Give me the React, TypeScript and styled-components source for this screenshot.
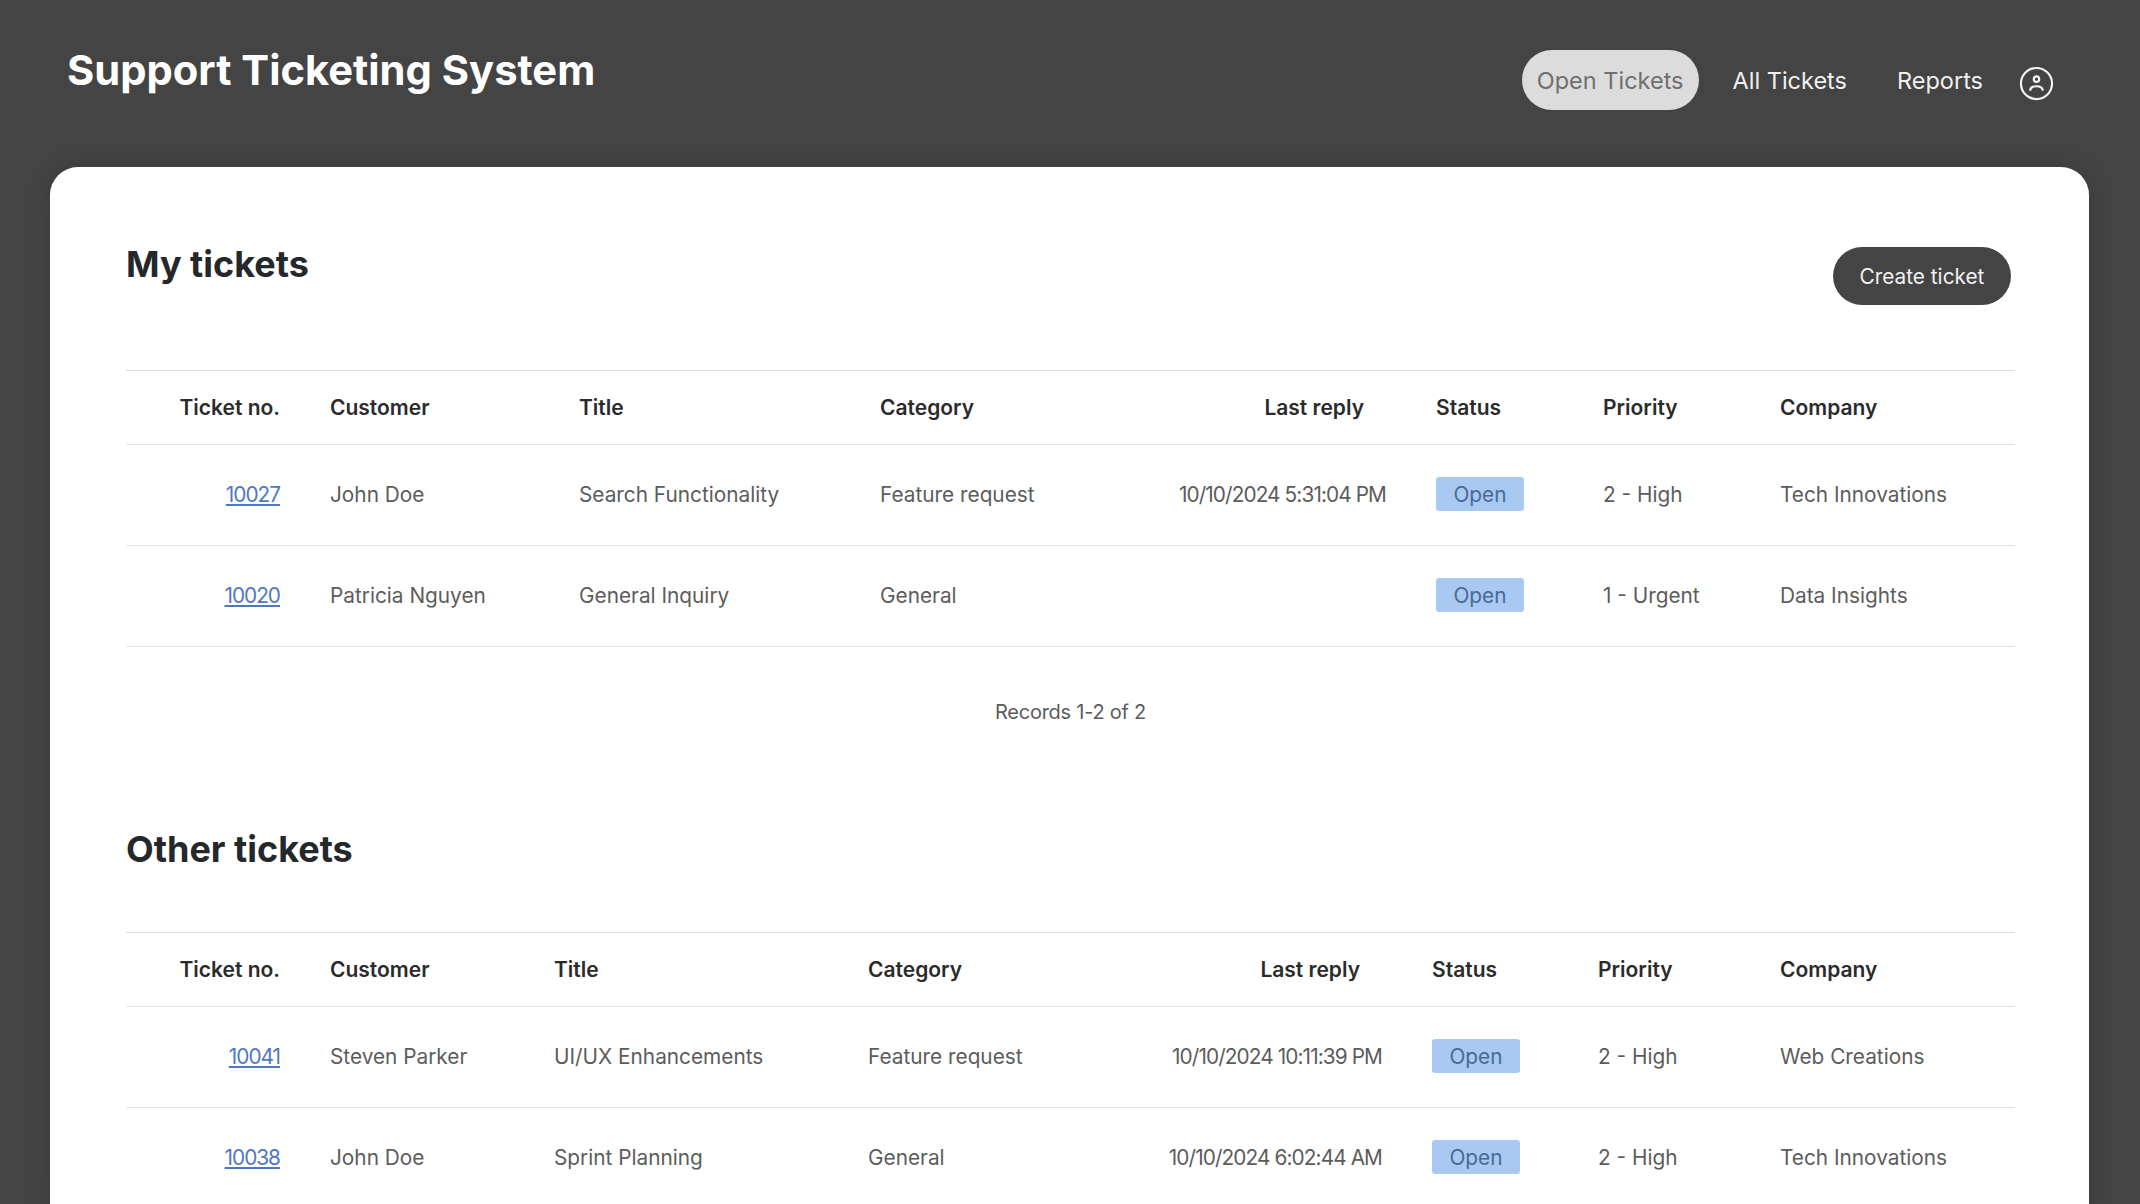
import React from 'react';
import styled, { createGlobalStyle } from 'styled-components';

const GlobalStyle = createGlobalStyle`
    html, body {
        margin: 0;
        padding: 0;
        height: 100%;
        overflow: hidden;
        background: #444444;
    }
`;

const Page = styled.div`
    height: 100vh;
    overflow: hidden;
    background: #444444;
    font-family: Inter, "Open Sans", sans-serif;
    display: flex;
    flex-direction: column;
`;

const Header = styled.header`
    flex: 0 0 167px;
    height: 167px;
    box-sizing: border-box;
    padding: 50px 86px 0 67px;
    display: flex;
    justify-content: space-between;
    align-items: flex-start;
`;

const Brand = styled.h1`
    margin: 0;
    font-size: 41.7px;
    line-height: 40px;
    font-weight: 700;
    color: #ffffff;
`;

const Nav = styled.nav`
    display: flex;
    align-items: center;
    height: 60px;
    gap: 18px;
`;

const NavItem = styled.a<{ $active?: boolean }>`
    display: flex;
    align-items: center;
    height: 60px;
    padding: ${(p) => (p.$active ? '0 15px' : '0 16px')};
    font-size: 23.5px;
    font-weight: 400;
    color: ${(p) => (p.$active ? '#6f6f6f' : '#f0f0f0')};
    background: ${(p) => (p.$active ? '#dcdcdc' : 'transparent')};
    border-radius: 30px;
`;

const UserIcon = styled.svg`
    width: 35px;
    height: 35px;
    margin: 6px 0 0 2px;
    color: #f4f4f4;
`;

const Card = styled.main`
    flex: 1;
    margin: 0 51px 0 50px;
    padding: 80px 74px 0 76px;
    background: #ffffff;
    border-radius: 28px 28px 0 0;
    box-shadow: 0 0 24px rgba(0, 0, 0, 0.15);
`;

const SectionHead = styled.div`
    display: flex;
    justify-content: space-between;
    align-items: flex-start;
    height: 123px;
`;

const OtherHead = styled(SectionHead)`
    height: 100px;
`;

const Heading = styled.h2`
    margin: 0;
    font-size: 36px;
    line-height: 34px;
    font-weight: 700;
    color: #25282b;
`;

const CreateButton = styled.button`
    width: 178px;
    height: 58px;
    margin-right: 4px;
    border: none;
    border-radius: 29px;
    background: #444444;
    color: #f2f2f2;
    font-family: inherit;
    font-size: 20.8px;
`;

const Table = styled.table`
    width: 100%;
    table-layout: fixed;
    border-collapse: collapse;
    border-top: 1px solid #dedede;
`;

const HeadCell = styled.th<{ $align?: string; $inset?: number }>`
    height: 73px;
    padding: 0 ${(p) => 25 + (p.$inset || 0)}px 0 25px;
    text-align: ${(p) => p.$align || 'left'};
    font-size: 21px;
    font-weight: 600;
    color: #2b2b2b;
    border-bottom: 1px solid #e2e2e2;
`;

const BodyCell = styled.td<{ $align?: string }>`
    height: 98px;
    padding: 0 25px 2px;
    text-align: ${(p) => p.$align || 'left'};
    font-size: 20.8px;
    color: #5c5c5c;
    white-space: nowrap;
    border-bottom: 1px solid #e2e2e2;
`;

// the digits are narrower in the original font
const ReplyCell = styled(BodyCell)`
    letter-spacing: -0.9px;
`;

const TicketLink = styled.a`
    color: #4f78c4;
    letter-spacing: -1px;
    text-decoration: underline;
`;

const StatusBadge = styled.span`
    display: flex;
    align-items: center;
    justify-content: center;
    width: 88px;
    height: 34px;
    border-radius: 3px;
    background: #a9c8f2;
    color: #4a6a96;
`;

const Records = styled.div`
    height: 185px;
    padding-top: 53px;
    box-sizing: border-box;
    text-align: center;
    font-size: 20px;
    line-height: 24px;
    letter-spacing: -0.25px;
    color: #5c5c5c;
`;

interface Ticket {
    no: string;
    customer: string;
    title: string;
    category: string;
    reply: string;
    priority: string;
    company: string;
}

const myTickets: Ticket[] = [
    { no: '10027', customer: 'John Doe', title: 'Search Functionality', category: 'Feature request', reply: '10/10/2024 5:31:04 PM', priority: '2 - High', company: 'Tech Innovations' },
    { no: '10020', customer: 'Patricia Nguyen', title: 'General Inquiry', category: 'General', reply: '', priority: '1 - Urgent', company: 'Data Insights' },
];

const otherTickets: Ticket[] = [
    { no: '10041', customer: 'Steven Parker', title: 'UI/UX Enhancements', category: 'Feature request', reply: '10/10/2024 10:11:39 PM', priority: '2 - High', company: 'Web Creations' },
    { no: '10038', customer: 'John Doe', title: 'Sprint Planning', category: 'General', reply: '10/10/2024 6:02:44 AM', priority: '2 - High', company: 'Tech Innovations' },
];

const TicketTable: React.FC<{ rows: Ticket[]; widths: number[] }> = ({ rows, widths }) => (
    <Table>
        <colgroup>
            {widths.map((w, i) => (
                <col key={i} width={w} />
            ))}
        </colgroup>
        <thead>
            <tr>
                <HeadCell $align="right">Ticket no.</HeadCell>
                <HeadCell>Customer</HeadCell>
                <HeadCell>Title</HeadCell>
                <HeadCell>Category</HeadCell>
                <HeadCell $align="right" $inset={22}>Last reply</HeadCell>
                <HeadCell>Status</HeadCell>
                <HeadCell>Priority</HeadCell>
                <HeadCell>Company</HeadCell>
            </tr>
        </thead>
        <tbody>
            {rows.map((t) => (
                <tr key={t.no}>
                    <BodyCell $align="right"><TicketLink href="#">{t.no}</TicketLink></BodyCell>
                    <BodyCell>{t.customer}</BodyCell>
                    <BodyCell>{t.title}</BodyCell>
                    <BodyCell>{t.category}</BodyCell>
                    <ReplyCell $align="right">{t.reply}</ReplyCell>
                    <BodyCell><StatusBadge>Open</StatusBadge></BodyCell>
                    <BodyCell>{t.priority}</BodyCell>
                    <BodyCell>{t.company}</BodyCell>
                </tr>
            ))}
        </tbody>
    </Table>
);

const App: React.FC = () => (
    <Page>
        <GlobalStyle />
        <Header>
            <Brand>Support Ticketing System</Brand>
            <Nav>
                <NavItem $active>Open Tickets</NavItem>
                <NavItem>All Tickets</NavItem>
                <NavItem>Reports</NavItem>
                <UserIcon viewBox="0 0 36 36" fill="none" stroke="currentColor" strokeWidth="2.2">
                    <circle cx="18" cy="18" r="16" />
                    <circle cx="18" cy="13.5" r="2.8" />
                    <path d="M11.5 25.5C11.5 22.2 14 20.8 18 20.8S24.5 22.2 24.5 25.5" />
                </UserIcon>
            </Nav>
        </Header>
        <Card>
            <SectionHead>
                <Heading>My tickets</Heading>
                <CreateButton>Create ticket</CreateButton>
            </SectionHead>
            <TicketTable rows={myTickets} widths={[179, 249, 301, 285, 271, 167, 177, 260]} />
            <Records>Records 1-2 of 2</Records>
            <OtherHead>
                <Heading>Other tickets</Heading>
            </OtherHead>
            <TicketTable rows={otherTickets} widths={[179, 224, 314, 277, 287, 166, 182, 260]} />
        </Card>
    </Page>
);

export default App;
